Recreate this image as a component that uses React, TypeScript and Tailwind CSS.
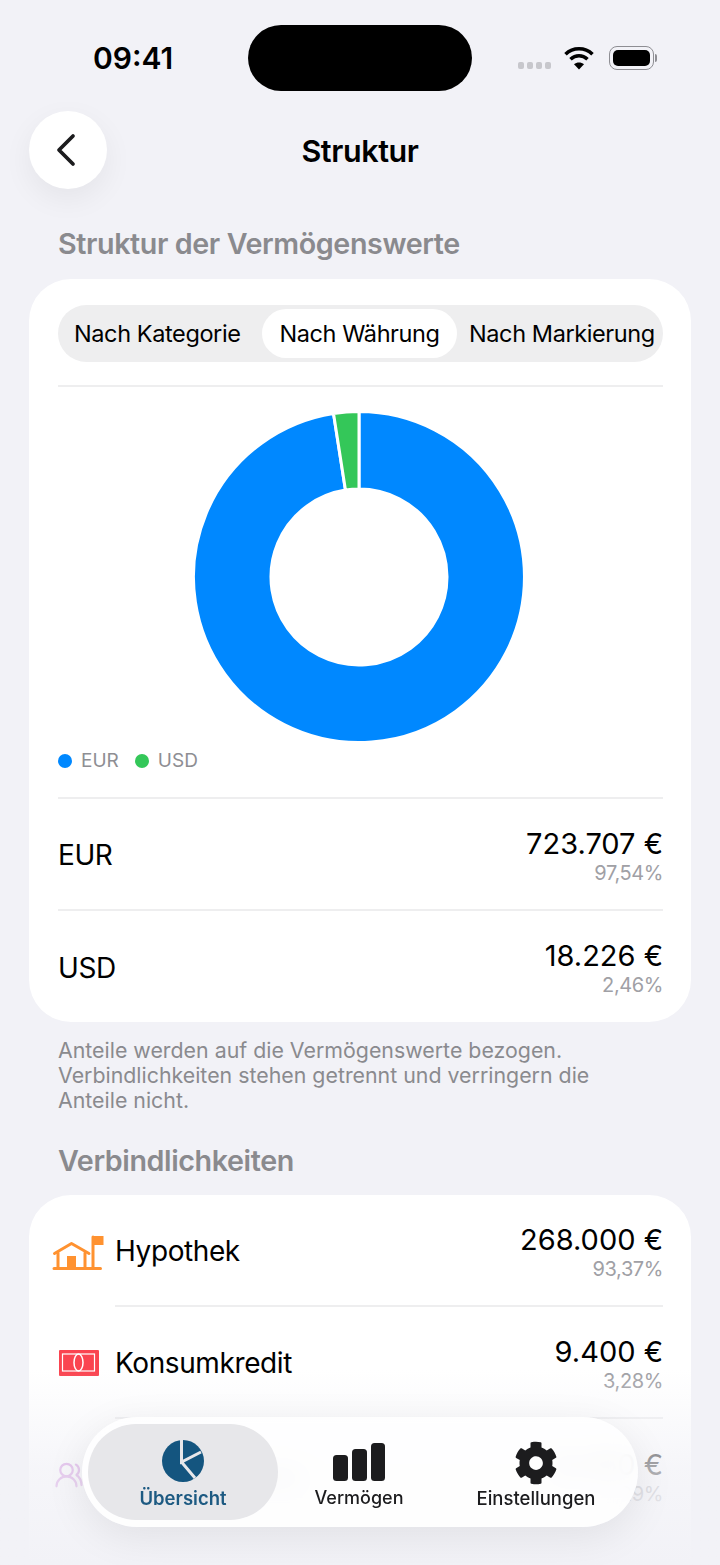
import { ChevronLeft, UsersRound } from 'lucide-react';
import { FaCog } from 'react-icons/fa';

const polar = (r: number, deg: number) => {
  const a = ((deg - 90) * Math.PI) / 180;
  return `${(167 + r * Math.cos(a)).toFixed(2)} ${(167 + r * Math.sin(a)).toFixed(2)}`;
};

const donutSlice = (from: number, to: number) => {
  const large = to - from > 180 ? 1 : 0;
  return `M${polar(165.5, from)} A165.5 165.5 0 ${large} 1 ${polar(165.5, to)} L${polar(88, to)} A88 88 0 ${large} 0 ${polar(88, from)} Z`;
};

function Donut() {
  return (
    <svg width="334" height="334" viewBox="0 0 334 334">
      <path d={donutSlice(0, 351.14)} fill="#0088ff" stroke="#fff" strokeWidth="3" />
      <path d={donutSlice(351.14, 360)} fill="#34c759" stroke="#fff" strokeWidth="3" />
    </svg>
  );
}

function WifiIcon() {
  return (
    <svg width="30" height="24" viewBox="0 0 30 24" fill="none" stroke="#000" strokeWidth="3.6">
      <path d="M1.5 8.2C9 1 21 1 28.500 8.200" />
      <path d="M6.500 13.200C11.500 8.600 18.500 8.600 23.500 13.200" />
      <path d="M15 23.500L10 18.200C12.800 15.800 17.200 15.800 20 18.200Z" fill="#000" stroke="none" />
    </svg>
  );
}

function Battery() {
  return (
    <div className="flex items-center gap-[1px]">
      <div className="w-[45px] h-[24px] rounded-[8px] border border-[#8e8e93] p-[3px]">
        <div className="w-full h-full rounded-[5px] bg-black" />
      </div>
      <div className="w-[2px] h-[8px] rounded-r-full bg-[#8e8e93]" />
    </div>
  );
}

function HouseFlag() {
  return (
    <svg width="54" height="36" viewBox="0 0 54 36" fill="none" stroke="#ff9230" strokeWidth="3" className="-ml-[2px] mt-[3px]">
      <path d="M2.500 18.500L19.500 8.500L37 18.500" strokeLinecap="round" strokeLinejoin="round" />
      <path d="M6 18V33M33 18V33M41 2V33M2 33.500H48.500" strokeLinecap="round" />
      <rect x="15" y="21" width="9" height="12" fill="#ff9230" stroke="none" />
      <rect x="41" y="1" width="10.500" height="9" fill="#ff9230" stroke="none" />
    </svg>
  );
}

function Banknote() {
  return (
    <svg width="40" height="26" viewBox="0 0 40 26" className="ml-[5px]">
      <rect width="40" height="26" rx="1" fill="#fa4450" />
      <rect x="3.500" y="4" width="32" height="17" fill="none" stroke="#fff" strokeWidth="1.200" />
      <ellipse cx="19.500" cy="12.500" rx="4.500" ry="8.500" fill="none" stroke="#fff" strokeWidth="1.500" />
    </svg>
  );
}

function PieIcon() {
  return (
    <svg width="44" height="44" viewBox="0 0 44 44">
      <circle cx="22" cy="22" r="21" fill="#14557f" />
      <path d="M20.500 0V23L40 13M20.500 23L34 39" fill="none" stroke="#e7e7ea" strokeWidth="3" />
    </svg>
  );
}

function BarsIcon() {
  return (
    <svg width="52" height="38" viewBox="0 0 52 38" fill="#1c1c1e">
      <rect x="0" y="12" width="15" height="26" rx="3.500" />
      <rect x="19" y="6" width="15" height="32" rx="3.500" />
      <rect x="38" y="0" width="14" height="38" rx="3.500" />
    </svg>
  );
}

function Amount({ value, share }: { value: string; share: string }) {
  return (
    <div className="flex flex-col items-end mt-[3px]">
      <span className="text-[29px] leading-[34px] text-black tracking-normal">{value}</span>
      <span className="pt-[1px] text-[20px] leading-[23px] text-[#a0a0a5]">{share}</span>
    </div>
  );
}

const liabilities = [
  { name: 'Hypothek', value: '268.000 €', share: '93,37%', icon: <HouseFlag /> },
  { name: 'Konsumkredit', value: '9.400 €', share: '3,28%', icon: <Banknote /> },
  { name: 'Privatdarlehen', value: '9.450 €', share: '3,29%', icon: <UsersRound size={30} color="#c86fd8" strokeWidth={1.8} /> },
];

export default function App() {
  return (
    <div className="relative w-[720px] h-[1565px] overflow-hidden bg-[#f2f2f7] font-['Inter',sans-serif] tracking-[-0.4px]">
      <div className="absolute left-[248px] top-[25px] w-[224px] h-[66px] rounded-full bg-black" />

      <div className="flex items-center h-[116px] pl-[93px] pr-[63px]">
        <span className="text-[30px] font-semibold text-black tracking-normal">09:41</span>
        <div className="ml-auto flex items-center gap-[3px] mt-[15px] mr-[13px]">
          <span className="w-[6px] h-[7px] rounded-[2px] bg-[#c7c7cc]" />
          <span className="w-[6px] h-[7px] rounded-[2px] bg-[#c7c7cc]" />
          <span className="w-[6px] h-[7px] rounded-[2px] bg-[#c7c7cc]" />
          <span className="w-[6px] h-[7px] rounded-[2px] bg-[#c7c7cc]" />
        </div>
        <div className="mr-[15px]">
          <WifiIcon />
        </div>
        <Battery />
      </div>

      <div className="relative flex items-center justify-center h-[78px] -mt-[5px]">
        <div className="absolute left-[29px] top-0 w-[78px] h-[78px] rounded-full bg-white flex items-center justify-center shadow-[0_10px_30px_rgba(0,0,0,0.06)]">
          <ChevronLeft size={56} color="#1c1c1e" strokeWidth={1.6} className="-ml-[5px]" />
        </div>
        <h1 className="mt-[2px] text-[30.500px] font-semibold text-black">Struktur</h1>
      </div>

      <h2 className="mt-[38px] ml-[58px] h-[34px] text-[28.700px] leading-[34px] font-semibold text-[#8a8a8e]">
        Struktur der Vermögenswerte
      </h2>

      <section className="mx-[29px] mt-[18px] h-[743px] rounded-[42px] bg-white pl-[29px] pr-[28px] pt-[26px]">
        <div className="flex items-center h-[57px] rounded-full bg-[#eeeeef] text-[23.500px] font-normal text-black">
          <span className="ml-[16px] w-[188px]">Nach Kategorie</span>
          <span className="flex items-center justify-center w-[195px] h-[49px] rounded-full bg-white">Nach Währung</span>
          <span className="ml-[12px] whitespace-nowrap">Nach Markierung</span>
        </div>
        <div className="mt-[23px] h-[2px] bg-[#eeeeef]" />

        <div className="flex justify-center mt-[23px] pr-[3px]">
          <Donut />
        </div>

        <div className="flex items-center mt-[5px] h-[24px] text-[19px] text-[#8e8e93] tracking-normal">
          <span className="w-[14px] h-[14px] rounded-full bg-[#0088ff]" />
          <span className="ml-[9px]">EUR</span>
          <span className="ml-[16px] w-[14px] h-[14px] rounded-full bg-[#34c759]" />
          <span className="ml-[9px]">USD</span>
        </div>

        <div className="mt-[24px] h-[2px] bg-[#eeeeef]" />
        <div className="flex items-center justify-between h-[112px] border-b-2 border-[#eeeeef]">
          <span className="pt-[2px] text-[28px] text-black">EUR</span>
          <Amount value="723.707 €" share="97,54%" />
        </div>
        <div className="flex items-center justify-between h-[111px]">
          <span className="pt-[2px] text-[28px] text-black">USD</span>
          <Amount value="18.226 €" share="2,46%" />
        </div>
      </section>

      <p className="mt-[16px] ml-[58px] w-[560px] text-[21.350px] leading-[25px] text-[#8a8a8e] tracking-normal">
        Anteile werden auf die Vermögenswerte bezogen. Verbindlichkeiten stehen getrennt und verringern die Anteile nicht.
      </p>

      <h2 className="mt-[31px] ml-[58px] h-[34px] text-[28.700px] leading-[34px] font-semibold text-[#8a8a8e]">
        Verbindlichkeiten
      </h2>

      <section className="mx-[29px] mt-[17px] h-[400px] rounded-t-[42px] bg-white pl-[25px] pr-[28px]">
        {liabilities.map((row, i) => (
          <div key={row.name} className="flex items-stretch h-[112px]">
            <div className="flex items-center w-[61px] shrink-0">{row.icon}</div>
            <div className={`flex flex-1 items-center justify-between ${i < 2 ? 'border-b-2 border-[#eeeeef]' : ''}`}>
              <span className="pt-[2px] text-[28px] text-black">{row.name}</span>
              <Amount value={row.value} share={row.share} />
            </div>
          </div>
        ))}
      </section>

      <div className="absolute left-0 right-0 bottom-0 h-[195px] bg-gradient-to-b from-[#f2f2f7]/0 via-[#f2f2f7]/70 to-[#f2f2f7]" />

      <nav className="absolute left-[82px] top-[1417px] flex items-center w-[556px] h-[110px] rounded-full bg-white/85 backdrop-blur-md pl-[6px] shadow-[0_10px_40px_rgba(0,0,0,0.08)]">
        <div className="flex flex-col items-center justify-end w-[190px] h-[96px] rounded-full bg-[#e7e7ea] pb-[11px]">
          <PieIcon />
          <span className="mt-[4px] text-[18.500px] leading-[22px] font-semibold text-[#1d5a82] tracking-normal">Übersicht</span>
        </div>
        <div className="flex flex-col items-center justify-end w-[162px] h-[96px] pb-[11px]">
          <BarsIcon />
          <span className="mt-[6px] text-[18px] leading-[22px] font-medium text-[#1c1c1e] tracking-normal">Vermögen</span>
        </div>
        <div className="flex flex-col items-center justify-end w-[190px] h-[96px] pb-[11px] ml-[1px]">
          <FaCog size={44} color="#1c1c1e" />
          <span className="mt-[2px] text-[18.500px] leading-[22px] font-medium text-[#1c1c1e] tracking-normal">Einstellungen</span>
        </div>
      </nav>
    </div>
  );
}
